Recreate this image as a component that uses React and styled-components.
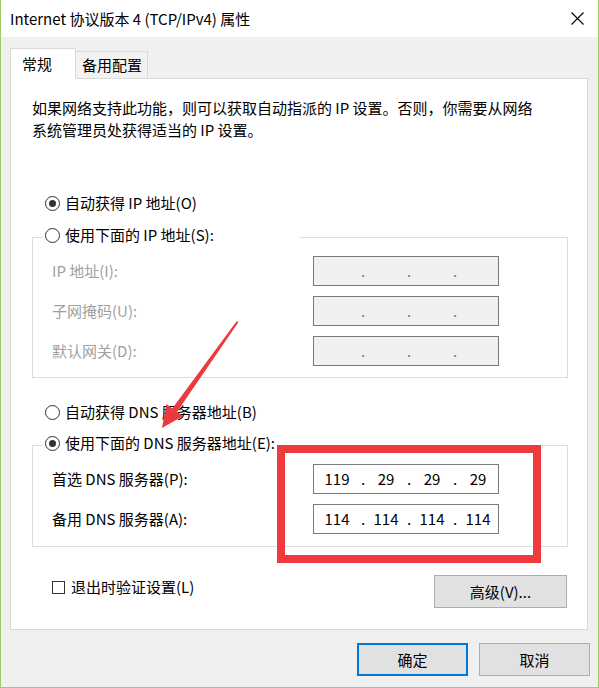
import React from "react";
import styled, { createGlobalStyle } from "styled-components";

const FONT = `"Noto Sans CJK SC", "Noto Sans", sans-serif`;

const Global = createGlobalStyle`
  html, body { margin: 0; padding: 0; background: #fff; }
  body { font-family: ${FONT}; }
  * { box-sizing: border-box; }
`;

const Window = styled.div`
  position: relative;
  width: 599px;
  height: 688px;
  border: 1px solid #9ccc65;
  border-top: none;
  background: #f0f0f0;
  display: flex;
  flex-direction: column;
  font-family: ${FONT};
  font-size: 15px;
  color: #000;
`;

const TitleBar = styled.div`
  height: 37px;
  flex: none;
  background: #fff;
  display: flex;
  align-items: center;
  justify-content: space-between;
  padding: 0 14px 0 9px;
  font-size: 15px;
  line-height: 20px;
`;

const TabArea = styled.div`
  padding: 11px 10px 0 9px;
  display: flex;
  flex-direction: column;
`;

const TabStrip = styled.div`
  display: flex;
  align-items: flex-start;
  height: 31px;
  margin-bottom: -1px;
  position: relative;
  z-index: 1;
`;

const Tab = styled.div`
  border: 1px solid #d9d9d9;
  border-bottom: none;
  line-height: 22px;
  white-space: nowrap;
  ${(p) =>
    p.$active
      ? `
    width: 66px;
    height: 31px;
    padding: 4px 0 0 11px;
    background: #fff;
  `
      : `
    height: 27px;
    margin-top: 3px;
    border-left: none;
    padding: 2px 5px 0 6px;
    background: #f2f2f2;
  `}
`;

const Panel = styled.div`
  background: #fff;
  border: 1px solid #d9d9d9;
  padding: 18px 19px 21px 21px;
  display: flex;
  flex-direction: column;
`;

const Description = styled.p`
  margin: 0;
  line-height: 22px;
  white-space: nowrap;
`;

const RadioRow = styled.div`
  display: flex;
  align-items: center;
  gap: 5px;
  height: 22px;
  line-height: 22px;
  white-space: nowrap;
  margin-top: ${(p) => p.$mt || 0}px;
  margin-left: 13px;
`;

const Legend = styled.div`
  display: flex;
  align-items: center;
  gap: 5px;
  height: 22px;
  line-height: 22px;
  white-space: nowrap;
  width: ${(p) => p.$w}px;
  margin: -14px 0 0 10px;
  padding-left: 2px;
  background: #fff;
`;

const RadioCircle = styled.span`
  position: relative;
  flex: none;
  width: 15px;
  height: 15px;
  border: 1px solid #333;
  border-radius: 50%;
  background: #fff;
  &::after {
    content: "";
    display: ${(p) => (p.$checked ? "block" : "none")};
    position: absolute;
    left: 3px;
    top: 3px;
    width: 7px;
    height: 7px;
    border-radius: 50%;
    background: #333;
  }
`;

const Group = styled.div`
  border: 1px solid #dcdcdc;
  margin-top: ${(p) => p.$mt}px;
  padding-bottom: ${(p) => p.$pb}px;
  display: flex;
  flex-direction: column;
`;

const FieldGrid = styled.div`
  display: grid;
  grid-template-columns: 261px 186px;
  row-gap: 10px;
  align-items: center;
  padding-left: 19px;
  margin-top: 10px;
`;

const FieldLabel = styled.div`
  line-height: 22px;
  white-space: nowrap;
  color: ${(p) => (p.$disabled ? "#a0a0a0" : "#000")};
`;

const IpBox = styled.div`
  height: 30px;
  border: 1px solid #7a7a7a;
  background: ${(p) => (p.$disabled ? "#f0f0f0" : "#fff")};
  color: ${(p) => (p.$disabled ? "#7a7a7a" : "#000")};
  display: grid;
  grid-template-columns: 46px 6px 40px 6px 40px 6px 40px;
  align-items: center;
  text-align: center;
  line-height: 28px;
  font-size: 15px;
`;

const Octet = styled.span`
  display: block;
  text-align: center;
`;

const Dot = styled.span`
  display: block;
  text-align: center;
`;

const CheckRow = styled.div`
  margin-top: 28px;
  display: flex;
  justify-content: space-between;
  align-items: flex-start;
  padding-left: 20px;
`;

const CheckLabel = styled.div`
  display: flex;
  align-items: center;
  gap: 6px;
  height: 22px;
  line-height: 22px;
  margin-top: 1px;
  white-space: nowrap;
`;

const CheckBox = styled.span`
  width: 13px;
  height: 13px;
  border: 1px solid #333;
  background: #fff;
`;

const Button = styled.div`
  display: flex;
  align-items: center;
  justify-content: center;
  width: ${(p) => p.$w}px;
  height: 33px;
  background: #e1e1e1;
  border: ${(p) => (p.$primary ? "2px solid #0078d7" : "1px solid #adadad")};
  margin-right: ${(p) => p.$mr || 0}px;
  white-space: nowrap;
`;

const Footer = styled.div`
  display: flex;
  justify-content: flex-end;
  gap: 11px;
  padding: 13px 8px 0 0;
`;

const Highlight = styled.div`
  position: absolute;
  left: 276px;
  top: 445px;
  width: 264px;
  height: 118px;
  border: 8px solid #ef3a3e;
  pointer-events: none;
`;

const ArrowSvg = styled.svg`
  position: absolute;
  left: 149px;
  top: 315px;
  pointer-events: none;
`;

function CloseIcon() {
  return (
    <svg width="13" height="13" viewBox="0 0 13 13">
      <path d="M0.5 0.5 L12.5 12.5 M12.5 0.5 L0.5 12.5" stroke="#000" strokeWidth="1.1" fill="none" />
    </svg>
  );
}

function IpField({ values, disabled }) {
  const v = values || ["", "", "", ""];
  return (
    <IpBox $disabled={disabled}>
      <Octet>{v[0]}</Octet>
      <Dot>.</Dot>
      <Octet>{v[1]}</Octet>
      <Dot>.</Dot>
      <Octet>{v[2]}</Octet>
      <Dot>.</Dot>
      <Octet>{v[3]}</Octet>
    </IpBox>
  );
}

export default function App() {
  return (
    <>
      <Global />
      <Window>
        <TitleBar>
          <span>Internet 协议版本 4 (TCP/IPv4) 属性</span>
          <CloseIcon />
        </TitleBar>
        <TabArea>
          <TabStrip>
            <Tab $active>常规</Tab>
            <Tab>备用配置</Tab>
          </TabStrip>
          <Panel>
            <Description>
              如果网络支持此功能，则可以获取自动指派的 IP 设置。否则，你需要从网络
              <br />
              系统管理员处获得适当的 IP 设置。
            </Description>

            <RadioRow $mt={51}>
              <RadioCircle $checked />
              自动获得 IP 地址(O)
            </RadioRow>
            <Group $mt={23} $pb={11}>
              <Legend $w={257}>
                <RadioCircle />
                使用下面的 IP 地址(S):
              </Legend>
              <FieldGrid>
                <FieldLabel $disabled>IP 地址(I):</FieldLabel>
                <IpField disabled />
                <FieldLabel $disabled>子网掩码(U):</FieldLabel>
                <IpField disabled />
                <FieldLabel $disabled>默认网关(D):</FieldLabel>
                <IpField disabled />
              </FieldGrid>
            </Group>

            <RadioRow $mt={23}>
              <RadioCircle />
              自动获得 DNS 服务器地址(B)
            </RadioRow>
            <Group $mt={22} $pb={12}>
              <Legend $w={237}>
                <RadioCircle $checked />
                使用下面的 DNS 服务器地址(E):
              </Legend>
              <FieldGrid>
                <FieldLabel>首选 DNS 服务器(P):</FieldLabel>
                <IpField values={["119", "29", "29", "29"]} />
                <FieldLabel>备用 DNS 服务器(A):</FieldLabel>
                <IpField values={["114", "114", "114", "114"]} />
              </FieldGrid>
            </Group>

            <CheckRow>
              <CheckLabel>
                <CheckBox />
                退出时验证设置(L)
              </CheckLabel>
              <Button $w={133} $mr={1}>高级(V)...</Button>
            </CheckRow>
          </Panel>
        </TabArea>
        <Footer>
          <Button $w={111} $primary>确定</Button>
          <Button $w={111}>取消</Button>
        </Footer>

        <Highlight />
        <ArrowSvg width="95" height="120" viewBox="0 0 95 120">
          <polygon
            points="88.4,7.3 27.1,96.8 33,101 12,113 16.4,89 22.3,93.4 86.6,6.2"
            fill="#ea3a3d"
          />
        </ArrowSvg>
      </Window>
    </>
  );
}
